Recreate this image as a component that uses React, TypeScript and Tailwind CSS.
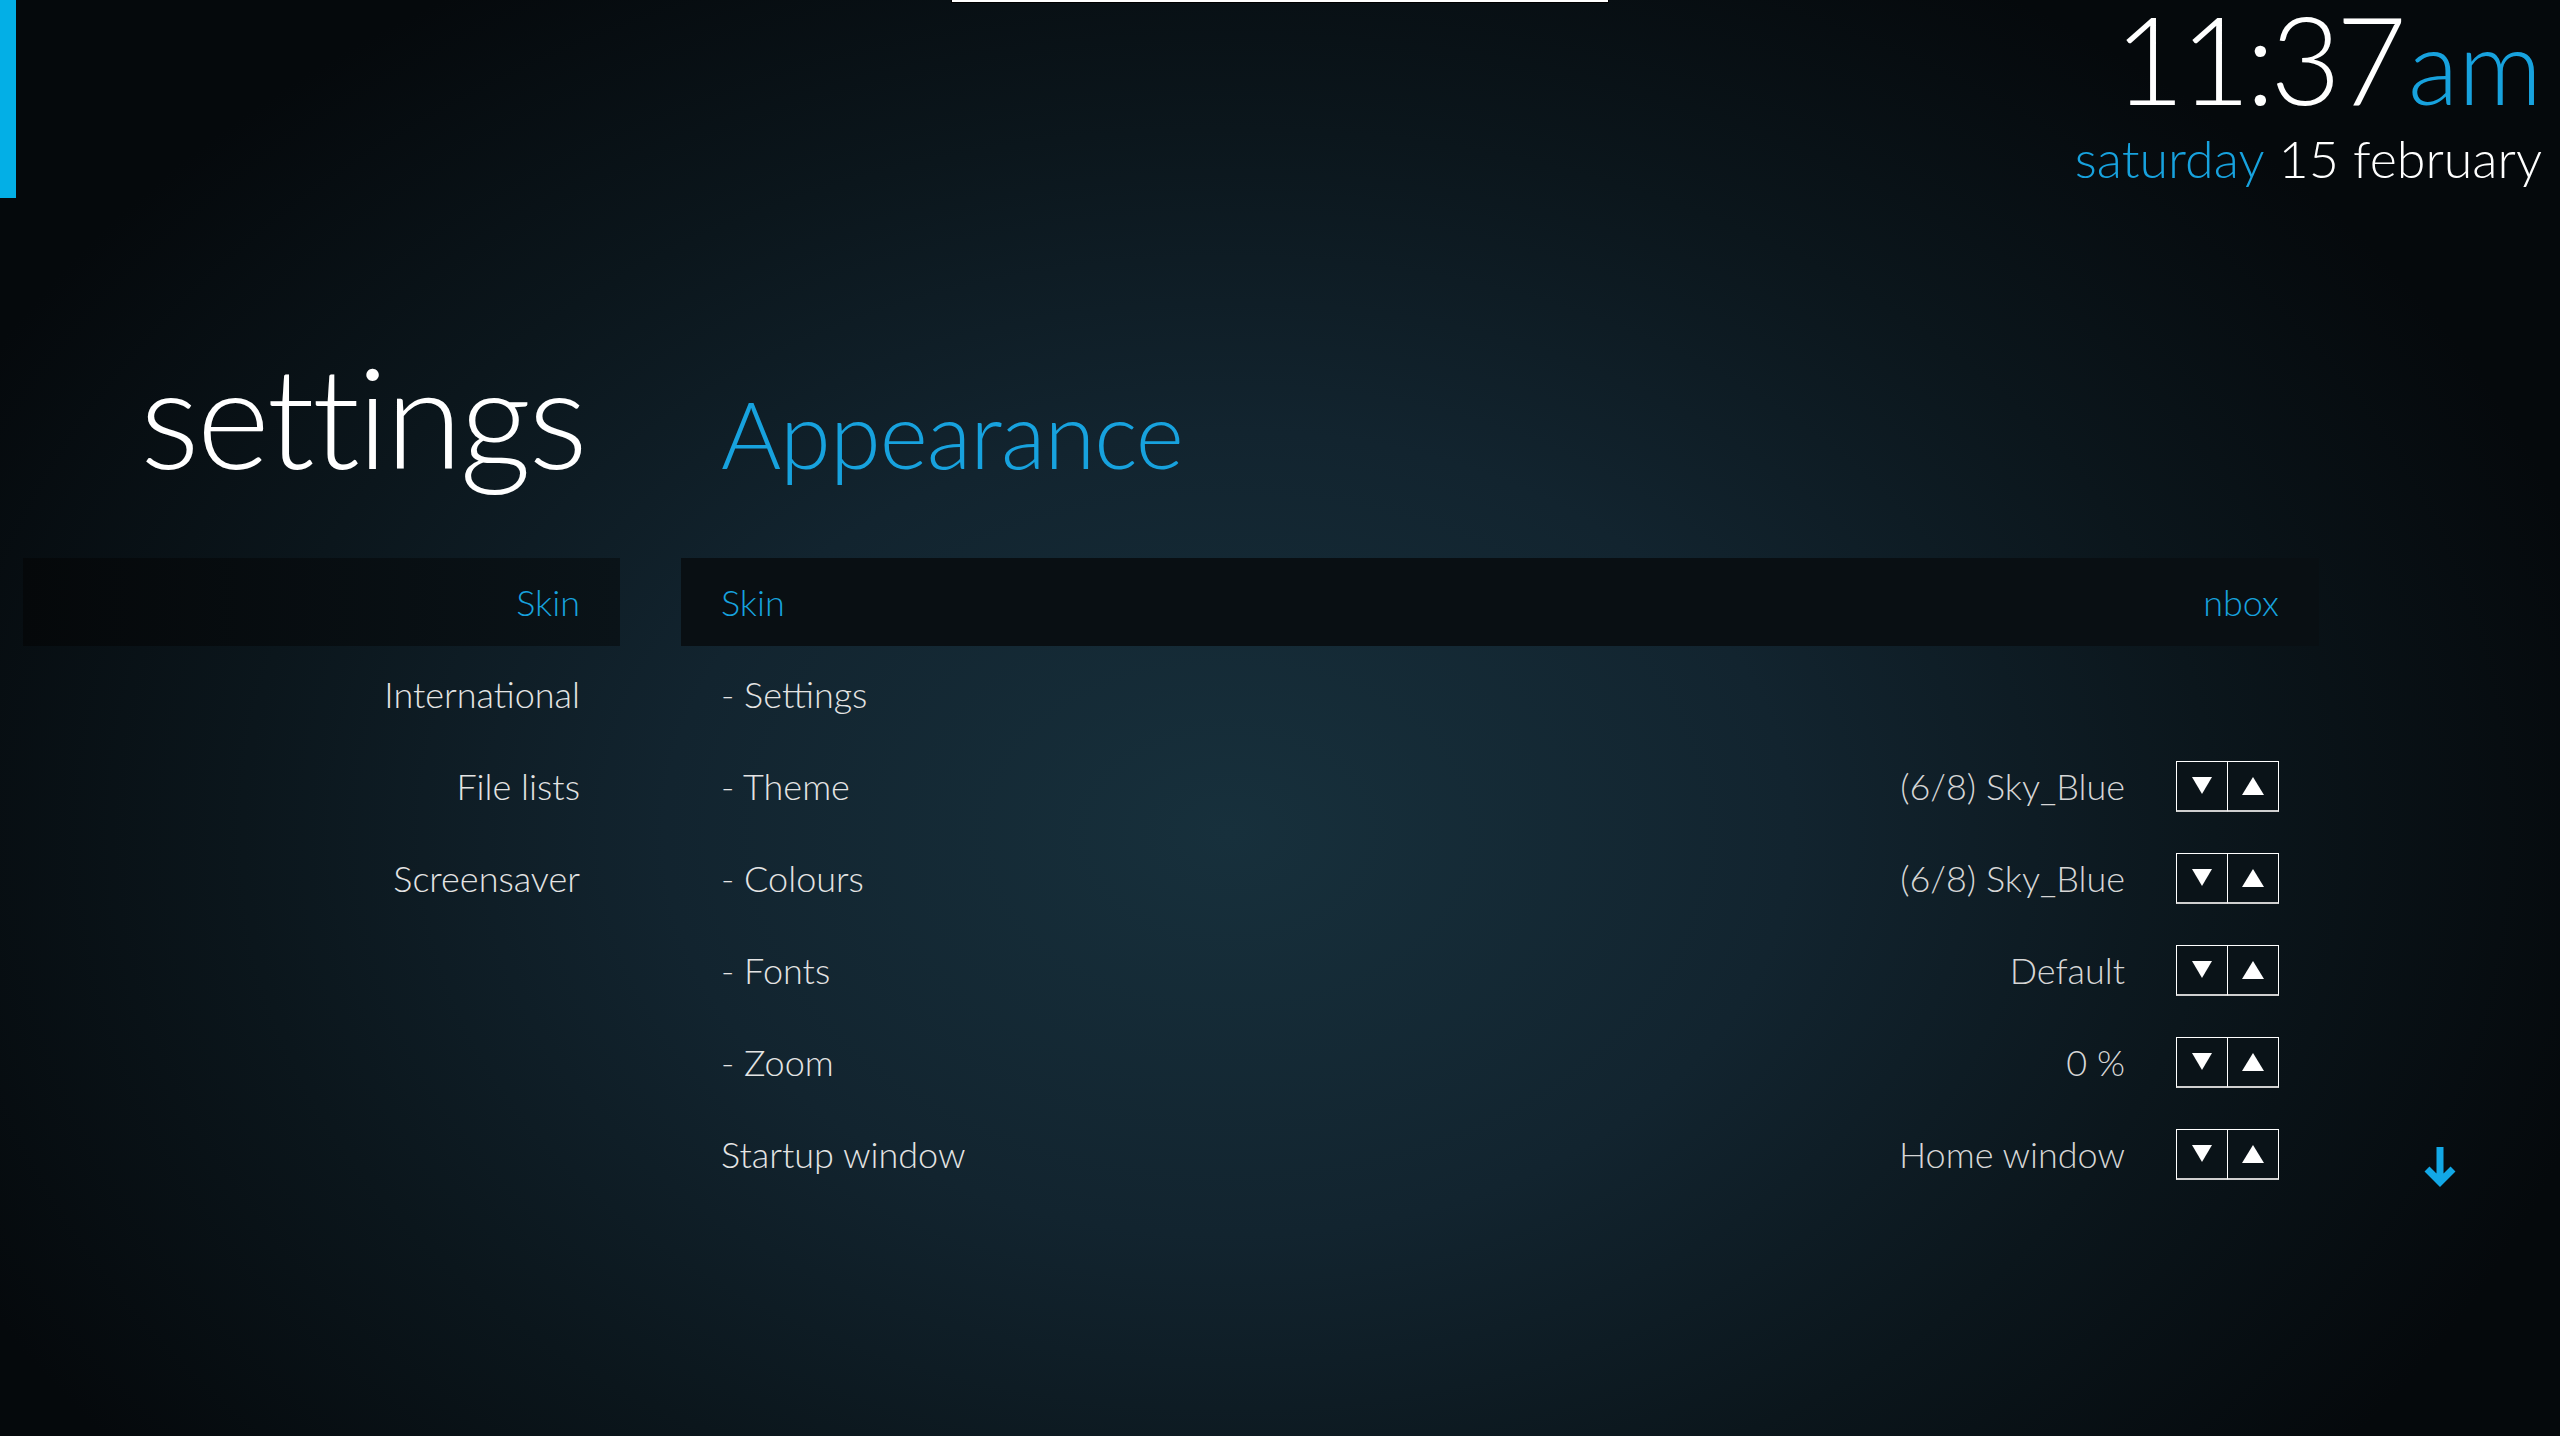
import React from "react"

const font = { fontFamily: "Lato, 'Open Sans', sans-serif" }

const categories = ["Skin", "International", "File lists", "Screensaver"]

interface Row {
  label: string
  value?: string
}

const rows: Row[] = [
  { label: "- Settings" },
  { label: "- Theme", value: "(6/8) Sky_Blue" },
  { label: "- Colours", value: "(6/8) Sky_Blue" },
  { label: "- Fonts", value: "Default" },
  { label: "- Zoom", value: "0 %" },
  { label: "Startup window", value: "Home window" },
]

function Spinner() {
  return (
    <div className="flex">
      <div className="flex h-[51px] w-[52px] items-center justify-center border border-b-2 border-white border-b-[#cfcfcf] bg-[#0a1318]">
        <svg width="20" height="17" viewBox="0 0 20 17">
          <polygon points="0,0 20,0 10,17" fill="#ffffff" />
        </svg>
      </div>
      <div className="-ml-px flex h-[51px] w-[52px] items-center justify-center border border-b-2 border-white border-b-[#cfcfcf] bg-[#0a1318]">
        <svg width="22" height="18" viewBox="0 0 22 18">
          <polygon points="11,0 22,18 0,18" fill="#ffffff" />
        </svg>
      </div>
    </div>
  )
}

export default function App() {
  return (
    <div
      className="flex h-[1436px] w-[2560px] flex-col overflow-hidden bg-[radial-gradient(ellipse_55%_70%_at_48%_58%,#17303c_0%,#12242f_40%,#0b161c_70%,#05090c_100%)] text-[#e4e4e4]"
      style={font}
    >
      {/* Header */}
      <div className="grid h-[198px] grid-cols-[1fr_658px_1fr]">
        <div className="h-[198px] w-[16px] bg-[#03afe6]" />
        <div className="h-[3px] border-x border-b border-black bg-white" />
        <div className="flex flex-col items-end pr-[18px] pt-[7px] font-light">
          <div className="text-[122px] leading-[0.85] tracking-[-0.04em] text-white">
            11:37<span className="ml-[6px] text-[104px] tracking-normal text-[#17a2de]">am</span>
          </div>
          <div className="mt-[21px] text-[52px] leading-none">
            <span className="text-[#17a2de]">saturday</span>
            <span className="ml-[14px] text-white">15 february</span>
          </div>
        </div>
      </div>

      {/* Titles */}
      <div className="mt-[147px] flex items-baseline pl-[23px]">
        <div className="w-[597px] pr-[35px] text-right text-[140px] font-light leading-none tracking-[-0.02em] text-white">
          settings
        </div>
        <div className="ml-[101px] text-[92px] font-light leading-none tracking-[-0.01em] text-[#17a2de]">
          Appearance
        </div>
      </div>

      {/* Content */}
      <div className="mt-[73px] flex pl-[23px]">
        <div className="flex w-[597px] flex-col gap-[4px]">
          {categories.map((c, i) => (
            <div
              key={c}
              className={
                i === 0
                  ? "flex h-[88px] items-center justify-end bg-[linear-gradient(90deg,#05080a,#0a1318)] pr-[40px] text-[36px] font-light text-[#17a2de]"
                  : "flex h-[88px] items-center justify-end pr-[40px] text-[36px] font-light"
              }
            >
              {c}
            </div>
          ))}
        </div>

        <div className="ml-[61px] flex w-[1638px] flex-col gap-[4px]">
          <div className="flex h-[88px] items-center justify-between bg-[#090f13] px-[40px] text-[36px] font-light text-[#17a2de]">
            <span>Skin</span>
            <span>nbox</span>
          </div>
          {rows.map((r) => (
            <div key={r.label} className="flex h-[88px] items-center pl-[40px] pr-[40px] text-[36px] font-light">
              <span className="flex-1">{r.label}</span>
              {r.value && (
                <>
                  <span className="mr-[51px] text-[#d6d6d6]">{r.value}</span>
                  <Spinner />
                </>
              )}
            </div>
          ))}
        </div>

        <div className="ml-[105px] flex flex-col justify-end pb-[10px]">
          <svg width="32" height="41" viewBox="0 0 32 41">
            <path d="M16 0 V36 M3 22 L16 35 L29 22" stroke="#12a8e6" strokeWidth="7" fill="none" />
          </svg>
        </div>
      </div>
    </div>
  )
}
